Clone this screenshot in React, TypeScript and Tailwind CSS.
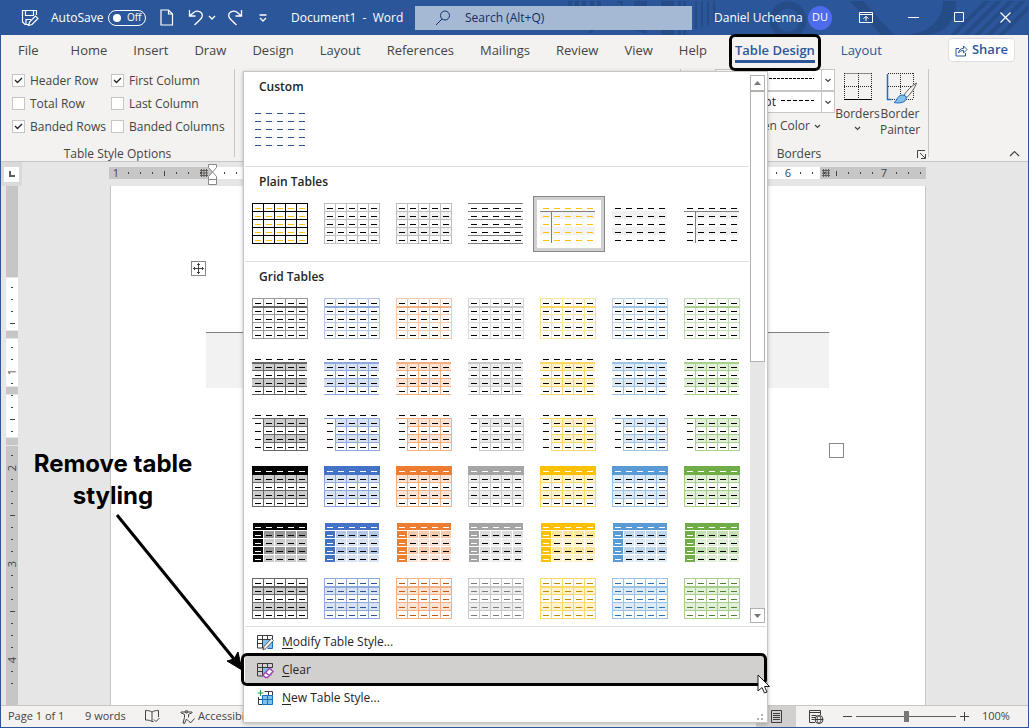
import { useState } from 'react'
import clsx from 'clsx'

// ─── Table style thumbnails ───────────────────────────────────────────────────

interface Palette {
  base: string
  line: string
  mid: string
  light: string
  text: string
}

const palettes: Record<string, Palette> = {
  Black: { base: '#000000', line: '#666666', mid: '#999999', light: '#cccccc', text: '#000000' },
  Blue: { base: '#4472c4', line: '#8eaadb', mid: '#b4c6e7', light: '#d9e2f3', text: '#2f5496' },
  Orange: { base: '#ed7d31', line: '#f4b083', mid: '#f7caac', light: '#fbe4d5', text: '#c45911' },
  Gray: { base: '#a5a5a5', line: '#c9c9c9', mid: '#dbdbdb', light: '#ededed', text: '#7b7b7b' },
  Gold: { base: '#ffc000', line: '#ffd966', mid: '#ffe599', light: '#fff2cc', text: '#bf8f00' },
  'Light Blue': { base: '#5b9bd5', line: '#9cc2e5', mid: '#bdd6ee', light: '#deeaf6', text: '#2e74b5' },
  Green: { base: '#70ad47', line: '#a8d08d', mid: '#c5e0b3', light: '#e2efd9', text: '#538135' },
}

const range = (n: number) => Array.from({ length: n }, (_, i) => i)

// Cells are 11x8, the table starts at 7,7 inside a 72x56 tile
const colX = (c: number) => 7 + c * 11
const rowY = (r: number) => 7 + r * 8

function Rect({ x, y, w, h, fill }: { x: number; y: number; w: number; h: number; fill: string }) {
  return <rect x={x} y={y} width={w} height={h} fill={fill} />
}

function Dashes({ color = '#000000', header, firstColumn }: { color?: string; header?: string; firstColumn?: string }) {
  return (
    <>
      {range(25).map((i) => {
        const r = Math.floor(i / 5)
        const c = i % 5
        const fill = r === 0 && header ? header : c === 0 && firstColumn ? firstColumn : color
        return <Rect key={i} x={colX(c) + 3} y={rowY(r) + 5} w={6} h={1} fill={fill} />
      })}
    </>
  )
}

function Grid({ color, fromRow = 0, fromCol = 0 }: { color: string; fromRow?: number; fromCol?: number }) {
  const x = colX(fromCol)
  const y = rowY(fromRow)
  return (
    <>
      {range(6 - fromRow).map((r) => (
        <Rect key={`h${r}`} x={x} y={rowY(r + fromRow)} w={63 - x} h={1} fill={color} />
      ))}
      {range(6 - fromCol).map((c) => (
        <Rect key={`v${c}`} x={colX(c + fromCol)} y={y} w={1} h={48 - y} fill={color} />
      ))}
    </>
  )
}

function Bands({ color, x = 7 }: { color: string; x?: number }) {
  return (
    <>
      <Rect x={x} y={15} w={62 - x} h={8} fill={color} />
      <Rect x={x} y={31} w={62 - x} h={8} fill={color} />
    </>
  )
}

const plainDrawings = [
  <><Grid color="#000000" /><Dashes color="#ffc000" /></>,
  <><Grid color="#bfbfbf" /><Dashes /></>,
  <><Bands color="#f2f2f2" /><Grid color="#bfbfbf" /><Dashes /></>,
  <>
    {range(6).map((r) => <Rect key={r} x={7} y={rowY(r)} w={55} h={1} fill="#7f7f7f" />)}
    <Dashes />
  </>,
  <>
    <Bands color="#f2f2f2" />
    <Rect x={7} y={15} w={55} h={1} fill="#7f7f7f" />
    <Rect x={18} y={15} w={1} h={32} fill="#7f7f7f" />
    <Dashes color="#ffc000" />
  </>,
  <><Bands color="#f2f2f2" /><Dashes /></>,
  <>
    <Bands color="#f2f2f2" x={19} />
    <Rect x={7} y={15} w={55} h={1} fill="#7f7f7f" />
    <Rect x={18} y={15} w={1} h={32} fill="#7f7f7f" />
    <Dashes />
  </>,
]

function gridDrawing(row: number, p: Palette) {
  switch (row) {
    case 0:
      return (
        <>
          <Grid color={p.mid} />
          <Rect x={8} y={15} w={54} h={2} fill={p.line} />
          <Dashes />
        </>
      )
    case 1:
      return (
        <>
          <Bands color={p.light} />
          <Rect x={7} y={15} w={55} h={2} fill={p.line} />
          {[23, 31, 39, 47].map((y) => <Rect key={y} x={7} y={y} w={55} h={1} fill={p.line} />)}
          {[18, 29, 40, 51].map((x) => <Rect key={x} x={x} y={16} w={1} h={31} fill={p.line} />)}
          <Dashes />
        </>
      )
    case 2:
      return (
        <>
          <Bands color={p.light} x={18} />
          <Rect x={7} y={15} w={55} h={1} fill={p.line} />
          <Grid color={p.line} fromRow={1} fromCol={1} />
          <Dashes />
        </>
      )
    case 3:
      return (
        <>
          <Bands color={p.light} />
          <Grid color={p.line} fromRow={1} />
          <Rect x={7} y={7} w={56} h={9} fill={p.base} />
          <Dashes header="#ffffff" />
        </>
      )
    case 4:
      return (
        <>
          <Rect x={8} y={8} w={54} h={7} fill={p.base} />
          {range(20).map((i) => {
            const r = Math.floor(i / 5)
            const c = i % 5
            const fill = c === 0 ? p.base : r % 2 === 0 ? p.mid : p.light
            return <Rect key={i} x={colX(c) + 1} y={rowY(r + 1) + 1} w={10} h={7} fill={fill} />
          })}
          <Dashes header="#ffffff" firstColumn="#ffffff" />
        </>
      )
    default:
      return (
        <>
          <Bands color={p.light} />
          <Grid color={p.line} />
          <Rect x={8} y={15} w={54} h={2} fill={p.line} />
          <Dashes color={p.text} />
        </>
      )
  }
}

function StyleTile({ label, selected, children }: { label: string; selected?: boolean; children: React.ReactNode }) {
  return (
    <button
      aria-label={label}
      aria-pressed={selected}
      className={clsx('grid h-14 w-[72px]', selected && 'bg-[#d2d0ce]')}
    >
      <svg width="72" height="56" shapeRendering="crispEdges">
        {selected && (
          <>
            <rect x="0.5" y="0.5" width="71" height="55" fill="none" stroke="#8a8886" />
            <rect x="4" y="4" width="64" height="48" fill="#ffffff" />
          </>
        )}
        {children}
      </svg>
    </button>
  )
}

function GallerySection({ title, last, children }: { title: string; last?: boolean; children: React.ReactNode }) {
  return (
    <section className={clsx(!last && 'border-b border-[#e1dfdd] pb-[9px]')}>
      <h3 className="flex h-[29px] items-center pl-3.5 font-semibold text-[#252423]">{title}</h3>
      <div className="flex flex-wrap">{children}</div>
    </section>
  )
}

// ─── Gallery menu ─────────────────────────────────────────────────────────────

function TableIcon({ kind }: { kind: 'modify' | 'clear' | 'new' }) {
  if (kind === 'new') {
    return (
      <svg width="17" height="17" viewBox="0 0 17 17" fill="none">
        <path d="M7.5 1.5h8v4M1.5 7v7.5h4M1.5 9.5h4M11.5 1.5v4" stroke="#3b3a39" />
        <path d="M5.500 5.500h10v9h-10z" fill="#83beec" stroke="#1a6fc0" />
        <path d="M10.500 5.500v9M5.500 9.500h10" stroke="#1a6fc0" />
        <path d="M3.500 0v6M0.500 3h6" stroke="#2ba14b" strokeWidth="1.200" />
      </svg>
    )
  }
  return (
    <svg width="17" height="17" viewBox="0 0 17 17" fill="none">
      <path d="M6 6h9v8H6z" fill="#83beec" />
      <path d="M0.500 1.500h15v4h-15zM0.500 5.500v8.500h6M5.500 1.500v12.500M10.500 1.500v4M0.500 9.500h5" stroke="#3b3a39" />
      {kind === 'modify' ? (
        <>
          <path d="M15.500 6v8.500h-5" stroke="#1a6fc0" />
          <path d="M14.500 4.500l2 2-7.500 8-3 1.500 1-3.500z" fill="#f3f2f1" stroke="#605e5c" />
        </>
      ) : (
        <path d="M12.500 6.500l3.500 3-5.500 6H8.500L6 13zM8.500 10.500l3.800 3" fill="#ffffff" stroke="#a33fb0" strokeWidth="1.400" />
      )}
    </svg>
  )
}

function MenuItem({ icon, hotkey, text, active }: { icon: React.ReactNode; hotkey: string; text: string; active?: boolean }) {
  return (
    <button
      role="menuitem"
      className={clsx('relative flex h-7 w-full items-center gap-2 pl-3 text-[#252423]', active ? 'bg-[#d2d0ce]' : 'hover:bg-[#edebe9]')}
    >
      {icon}
      <span>
        <u className="underline-offset-2">{hotkey}</u>
        {text}
      </span>
      {active && <span className="absolute -top-[3px] -right-0.5 -bottom-0.5 -left-1 rounded-md border-[3px] border-black" />}
    </button>
  )
}

function StyleGallery() {
  return (
    <div
      role="menu"
      className="absolute top-[71px] left-[242px] flex w-[525px] flex-col border border-[#c8c6c4] bg-white px-px text-xs shadow-[0_1px_4px_rgba(0,0,0,0.25)]"
    >
      <div className="flex h-[554px] gap-px overflow-hidden">
        <div className="w-[504px]">
          <GallerySection title="Custom">
            <StyleTile label="Custom style"><Dashes color="#2f5496" /></StyleTile>
          </GallerySection>
          <GallerySection title="Plain Tables">
            {plainDrawings.map((drawing, i) => (
              <StyleTile key={i} label={`Plain table ${i + 1}`} selected={i === 4}>{drawing}</StyleTile>
            ))}
          </GallerySection>
          <GallerySection title="Grid Tables" last>
            {range(6).map((row) =>
              Object.entries(palettes).map(([name, p]) => (
                <StyleTile key={`${row}-${name}`} label={`Grid table ${row + 1}, ${name}`}>
                  {gridDrawing(row, p)}
                </StyleTile>
              ))
            )}
          </GallerySection>
        </div>
        <div className="my-[3px] flex w-[15px] flex-col bg-[#e6e6e6]">
          <button aria-label="Scroll up" className="grid h-4 place-items-center border border-[#b3b0ad] bg-white">
            <svg width="7" height="4"><path d="M0 4l3.500-4L7 4z" fill="#7a7876" /></svg>
          </button>
          <div className="h-[271px] border border-[#b3b0ad] bg-white" />
          <button aria-label="Scroll down" className="mt-auto grid h-[15px] place-items-center border border-[#b3b0ad] bg-white">
            <svg width="7" height="4"><path d="M0 0h7L3.500 4z" fill="#7a7876" /></svg>
          </button>
        </div>
      </div>
      <div className="border-t border-[#e1dfdd] pt-px pr-px">
        <MenuItem icon={<TableIcon kind="modify" />} hotkey="M" text="odify Table Style..." />
        <MenuItem icon={<TableIcon kind="clear" />} hotkey="C" text="lear" active />
        <MenuItem icon={<TableIcon kind="new" />} hotkey="N" text="ew Table Style..." />
      </div>
      <svg className="mt-px mr-0.5 self-end" width="8" height="9" fill="#b3b0ad">
        <path d="M5 1h2v2H5zM5 5h2v2H5zM1 5h2v2H1z" />
      </svg>
    </div>
  )
}

// ─── Title bar ────────────────────────────────────────────────────────────────

function TitlePattern() {
  return (
    <svg className="pointer-events-none absolute top-0 right-0" width="480" height="35" fill="#254c87">
      <path d="M20 1h4v5h-4zM27 1h4v5h-4zM34 1h4v5h-4zM42 1h4v5h-4zM49 1h4v5h-4zM41 30h4v3h-4z" />
      <path d="M68 1h7v5zM86 1h13v5H86zM113 1h13v5h-13zM86 30h13v4zM113 30h13v5h-13zM130 1h3v5h-3zM135 1h3v5h-3zM130 30h3v5h-3zM135 30h3v5h-3z" />
      <path d="M147 1h2v28h-2zM153 1h2v26h-2zM159 1h2v24h-2zM165 1h2v20h-2z" />
      <circle cx="240" cy="20" r="15" fill="none" stroke="#254c87" strokeWidth="7" />
      <path d="M302 1h13l31 34h-13z" />
      <path d="M395 1h13c0 16-8 34-32 34h-18c26-2 37-18 37-34z" />
      <path d="M436 1h6l-34 34h-6zM448 1h6l-34 34h-6zM460 1h6l-34 34h-6zM472 1h6l-34 34h-6zM480 5v6l-24 24h-6z" />
    </svg>
  )
}

const iconBtn = 'flex h-6 items-center justify-center text-white'

function TitleBar() {
  return (
    <header className="relative flex h-[35px] items-center bg-[#2b579a] text-xs text-white">
      <TitlePattern />
      <div className="flex w-[414px] shrink-0 items-center pl-5">
        <button aria-label="Save" className={iconBtn}>
          <svg width="18" height="18" viewBox="0 0 18 18" fill="none" stroke="currentColor" strokeWidth="1.200">
            <path d="M15.500 6V1.500h-14V13l2.500 2.500h3M4.500 1.500v5h8v-5M5 15.500v-5h5M7.500 16.500l1-3.500 6-6 2.500 2.500-6 6z" />
          </svg>
        </button>
        <span className="ml-3 w-[57px]">AutoSave</span>
        <button role="switch" aria-checked="false" aria-label="AutoSave" className="flex h-4 w-[38px] items-center gap-1.5 rounded-full border border-white pl-1 text-[10px]">
          <span className="size-2 rounded-full bg-white" />
          Off
        </button>
        <button aria-label="New" className={clsx(iconBtn, 'ml-3.5')}>
          <svg width="14" height="17" viewBox="0 0 14 17" fill="none" stroke="currentColor" strokeWidth="1.200">
            <path d="M1 1h7.500l4 4v11H1zM8.500 1v4h4" />
          </svg>
        </button>
        <button aria-label="Undo" className={clsx(iconBtn, 'ml-3.5')}>
          <svg width="16" height="17" viewBox="0 0 16 17" fill="none" stroke="currentColor" strokeWidth="1.300">
            <path d="M1.500 1v6h6M1.500 7L6 3.200C10 0.500 15.500 3.500 14 8c-0.500 1.500-1.500 2.500-7.500 8" />
          </svg>
        </button>
        <button aria-label="Undo history" className={clsx(iconBtn, 'ml-1')}>
          <svg width="8" height="5" fill="none" stroke="currentColor" strokeWidth="1.300"><path d="M1 1l3 3 3-3" /></svg>
        </button>
        <button aria-label="Redo" className={clsx(iconBtn, 'ml-[11px]')}>
          <svg width="16" height="17" viewBox="0 0 16 17" fill="none" stroke="currentColor" strokeWidth="1.300">
            <path d="M14.500 1v6h-6M14.500 7L10 3.200C6 0.500 0.500 3.500 2 8c0.500 1.500 1.500 2.500 7.500 8" />
          </svg>
        </button>
        <button aria-label="Customize Quick Access Toolbar" className={clsx(iconBtn, 'ml-4')}>
          <svg width="8" height="8" fill="none" stroke="currentColor" strokeWidth="1.300"><path d="M0.500 1h7M1 4l3 3 3-3" /></svg>
        </button>
        <span className="ml-6 whitespace-pre">Document1  -  Word</span>
      </div>
      <label className="relative flex h-6 min-w-0 flex-1 items-center gap-3.5 bg-[#a6b9d4] pl-5 text-[#0f2f66]">
        <svg width="16" height="16" viewBox="0 0 16 16" fill="none" stroke="currentColor">
          <circle cx="10" cy="5.500" r="4.500" />
          <path d="M7 9l-6 6" />
        </svg>
        <input
          aria-label="Search"
          placeholder="Search (Alt+Q)"
          className="min-w-0 flex-1 bg-transparent outline-none placeholder:text-[#0f2f66]"
        />
      </label>
      <div className="relative flex w-[336px] shrink-0 items-center pl-[22px]">
        <span className="w-[94px] whitespace-nowrap">Daniel Uchenna</span>
        <button className="size-6 rounded-full bg-[#4f6bed] text-[11px]">DU</button>
        <button aria-label="Ribbon display options" className={clsx(iconBtn, 'ml-4 w-9')}>
          <svg width="14" height="11" viewBox="0 0 14 11" fill="none" stroke="currentColor">
            <path d="M0.500 0.500h13v10H0.500zM0.500 2.500h13M7 9V4.500M4.500 6.500L7 4.500l2.500 2" />
          </svg>
        </button>
        <button aria-label="Minimize" className={clsx(iconBtn, 'grow pl-1.5')}>
          <svg width="11" height="11" stroke="currentColor"><path d="M0 5.500h11" /></svg>
        </button>
        <button aria-label="Maximize" className={clsx(iconBtn, 'w-[46px]')}>
          <svg width="11" height="11" fill="none" stroke="currentColor"><path d="M0.500 0.500h9v9h-9z" /></svg>
        </button>
        <button aria-label="Close" className={clsx(iconBtn, 'w-[46px]')}>
          <svg width="11" height="11" stroke="currentColor" strokeWidth="1.200"><path d="M0.500 0.500l10 10M10.500 0.500l-10 10" /></svg>
        </button>
      </div>
    </header>
  )
}

// ─── Ribbon ───────────────────────────────────────────────────────────────────

const tabs = ['File', 'Home', 'Insert', 'Draw', 'Design', 'Layout', 'References', 'Mailings', 'Review', 'View', 'Help']

function RibbonTabs() {
  return (
    <nav className="flex h-[34px] items-start justify-between bg-[#f3f2f1] pr-[13px] pl-[17px] text-[13px] text-[#444444]">
      <div className="flex h-8 items-center gap-[26px]">
        {tabs.map((tab) => (
          <button key={tab} className="first:mr-1.5">{tab}</button>
        ))}
        <button className="relative ml-0.5 font-semibold whitespace-nowrap text-[#2b579a]">
          Table Design
          <span className="absolute inset-x-0 -bottom-0.5 h-[3px] bg-[#2b579a]" />
          <span className="absolute -inset-x-1.5 -top-[7px] -bottom-2.5 z-10 rounded-md border-[3px] border-black" />
        </button>
        <button className="text-[#2b579a]">Layout</button>
      </div>
      <button className="mt-[3px] flex h-6 items-center gap-1 rounded-sm border border-[#e1dfdd] bg-white px-1.5 font-semibold text-[#2b579a]">
        <svg width="13" height="13" viewBox="0 0 13 13" fill="none" stroke="currentColor">
          <path d="M4 4.500H1v7.500h9.500V9M3.500 9c0.500-3 2-4.500 5-4.500V2L12 5.500 8.500 9V6.500c-2 0-3.500 0.500-5 2.500z" />
        </svg>
        Share
      </button>
    </nav>
  )
}

function Option({ label, checked }: { label: string; checked?: boolean }) {
  const [on, setOn] = useState(!!checked)
  return (
    <label className="flex h-[23px] items-center gap-[5px] whitespace-nowrap">
      <span className="grid">
        <input
          type="checkbox"
          checked={on}
          onChange={(e) => setOn(e.target.checked)}
          className="size-[13px] appearance-none border border-[#c8c6c4] bg-white [grid-area:1/1]"
        />
        {on && (
          <svg className="pointer-events-none [grid-area:1/1]" width="13" height="13" fill="none" stroke="#252423" strokeWidth="1.300">
            <path d="M3 6l2.500 2.500L10 4" />
          </svg>
        )}
      </span>
      {label}
    </label>
  )
}

function Chevron() {
  return (
    <svg width="7" height="5" fill="none" stroke="#444444" strokeWidth="1.200"><path d="M1 1l2.500 2.500L6 1" /></svg>
  )
}

function LineSelect({ label, value, dash, start }: { label: string; value: string; dash: string; start: number }) {
  return (
    <div className="grid h-[22px] w-[120px]">
      <select aria-label={label} className="h-[22px] appearance-none border border-[#c8c6c4] bg-white pl-9 text-[#252423] [grid-area:1/1]">
        <option>{value}</option>
      </select>
      <svg className="pointer-events-none [grid-area:1/1]" width="120" height="22" fill="none" stroke="#000000">
        <path d={`M${start} 9.500H99`} strokeDasharray={dash} />
        <path d="M106.500 1v20" stroke="#c8c6c4" />
        <path d="M110.500 10l2.500 2.500 2.500-2.500" stroke="#444444" strokeWidth="1.200" />
      </svg>
    </div>
  )
}

function Ribbon() {
  return (
    <div className="flex h-[93px] border-b border-[#c8c6c4] bg-[#f3f2f1] text-xs text-[#444444]">
      <section className="mb-1 flex w-[234px] shrink-0 flex-col border-r border-[#c8c6c4]">
        <div className="grid grid-flow-col grid-rows-3 justify-start gap-x-[5px] pl-[11px]">
          <Option label="Header Row" checked />
          <Option label="Total Row" />
          <Option label="Banded Rows" checked />
          <Option label="First Column" checked />
          <Option label="Last Column" />
          <Option label="Banded Columns" />
        </div>
        <h2 className="mt-2 text-center leading-4">Table Style Options</h2>
      </section>
      <section className="mb-1 flex-1 border-r border-[#c8c6c4]" aria-label="Table Styles" />
      <section className="mb-1 flex w-[248px] shrink-0 flex-col border-r border-[#c8c6c4]">
        <div className="flex h-[69px] justify-end pr-2">
          <div className="flex flex-col">
            <LineSelect label="Line style" value=" " dash="3 1" start={50} />
            <LineSelect label="Line weight" value="½ pt" dash="4 2" start={66} />
            <button className="flex items-center gap-1 self-end pt-[5px] pr-3.5 leading-4 whitespace-nowrap">
              Pen Color <Chevron />
            </button>
          </div>
          <button className="flex w-[45px] flex-col items-center pt-1">
            <svg width="28" height="28" className="shrink-0" fill="none" stroke="#252423">
              <path d="M0.500 0.500h27M0.500 0v26M27.500 0v26M14.500 0v26M0 13.500h28" strokeDasharray="1 1" />
              <path d="M0 26.500h28" stroke="#000000" />
            </svg>
            <span className="mt-[5px] leading-4">Borders</span>
            <span className="mt-1"><Chevron /></span>
          </button>
          <button className="flex w-10 flex-col items-center pt-1">
            <svg className="ml-1 shrink-0" width="32" height="32" fill="none" stroke="#252423">
              <path d="M2 0.500h25M27.500 0v26M14.500 0v26M2 13.500h26M2 26.500h26" strokeDasharray="1 1" />
              <path d="M1.500 1v25.500h4" stroke="#1a6fc0" strokeWidth="1.500" />
              <path d="M30.500 10c-5 3-9 7-12.500 12l3 2.500C25 20 28.500 16 30.500 10z" fill="#f3f2f1" stroke="#605e5c" />
              <path d="M8 29.500c3-1 3-7 8-7.500 3 0 5 2 4 4.500-1.500 3.500-8 4-12 3z" fill="#83beec" stroke="#1a6fc0" />
            </svg>
            <span className="mt-px leading-4">Border Painter</span>
          </button>
        </div>
        <div className="mt-2 grid grid-cols-[1fr_auto] items-center pr-0.5">
          <h2 className="text-center leading-4">Borders</h2>
          <button aria-label="Borders settings">
            <svg width="9" height="9" fill="none" stroke="#444444"><path d="M0.500 8V0.500H8M3 3l5 5M8.500 4v4.500H4" /></svg>
          </button>
        </div>
      </section>
      <button aria-label="Collapse the ribbon" className="flex w-[99px] shrink-0 items-end justify-end pr-2 pb-1">
        <svg width="11" height="7" fill="none" stroke="#444444" strokeWidth="1.200"><path d="M1 6l4.500-4.500L10 6" /></svg>
      </button>
    </div>
  )
}

// ─── Document area ────────────────────────────────────────────────────────────

function GridMark() {
  return (
    <svg width="8" height="8" stroke="#605e5c"><path d="M1.500 0v8M4 0v8M6.500 0v8M0 1.500h8M0 4h8M0 6.500h8" /></svg>
  )
}

// Ticks stand 1/8 inch apart, 12px each
function Tick({ index, vertical }: { index: number; vertical?: boolean }) {
  const whole = index % 8 === 0 && index !== 0
  const half = Math.abs(index % 8) === 4
  return (
    <span className={clsx('flex size-3 shrink-0 items-center justify-center', vertical && '-rotate-90')}>
      {whole ? Math.abs(index / 8) : index !== 0 && <span className={clsx('w-px bg-[#444444]', half ? 'h-[5px]' : 'h-0.5')} />}
    </span>
  )
}

function HorizontalRuler() {
  return (
    <div className="relative mt-[5px] grid h-3 w-[816px] text-[11px] leading-3 text-[#444444]">
      <div className="flex [grid-area:1/1]">
        <div className="flex w-[103px] items-center justify-end bg-[#c6c6c6] pr-1"><GridMark /></div>
        <div className="w-[608px] bg-white" />
        <div className="flex flex-1 items-center bg-[#c6c6c6] pl-0.5"><GridMark /></div>
      </div>
      <div className="flex pl-px [grid-area:1/1]">
        {range(68).map((i) => (
          <Tick key={i} index={i - 8} />
        ))}
      </div>
      <svg className="absolute -top-[3px] left-[99px]" width="9" height="22" fill="#ffffff" stroke="#8a8886">
        <path d="M0.500 0.500h8v3l-4 4.500-4-4.500zM0.500 15.500v-3L4.500 8l4 4.500v3zM0.500 15.500h8v5h-8z" />
      </svg>
    </div>
  )
}

const rulerBands = [
  'h-[91px] bg-[#c6c6c6]',
  'h-[52px] bg-white',
  'h-[7px] bg-[#c6c6c6]',
  'h-[47px] bg-white',
  'h-[7px] bg-[#c6c6c6]',
  'h-[42px] bg-white',
  'h-[7px] bg-[#c6c6c6]',
  'flex-1 bg-[#c6c6c6]',
]

// Ticks that the table's row markers cover
const coveredTicks = [5, 14]

function VerticalRuler() {
  return (
    <div className="ml-[5px] grid w-[11px] shrink-0 text-[11px] leading-3 text-[#444444]">
      <div className="flex flex-col gap-px [grid-area:1/1]">
        {rulerBands.map((band, i) => (
          <div key={i} className={band} />
        ))}
      </div>
      <div className="flex flex-col items-center pt-24 [grid-area:1/1]">
        {range(34).map((i) => (
          <Tick key={i} index={coveredTicks.includes(i + 1) ? 0 : i + 1} vertical />
        ))}
      </div>
    </div>
  )
}

function Workspace() {
  return (
    <main className="flex flex-1 flex-col bg-[#e6e6e6]">
      <div className="flex h-6">
        <div className="mr-[87px] flex w-[21px] shrink-0 items-center justify-center bg-[#dadada]">
          <button aria-label="Left tab" className="grid size-[15px] place-items-center bg-white">
            <svg width="6" height="6" fill="none" stroke="#605e5c" strokeWidth="2"><path d="M1 0v5h5" /></svg>
          </button>
        </div>
        <HorizontalRuler />
      </div>
      <div className="flex flex-1">
        <VerticalRuler />
        <article className="ml-[93px] w-[816px] shrink-0 border-x border-[#c8c6c4] bg-white pt-[75px] pl-20">
          <button aria-label="Move table" className="grid size-[15px] place-items-center border border-[#8a8886]">
            <svg width="11" height="11" fill="none" stroke="#444444">
              <path d="M5.500 0v11M0 5.500h11M4 2l1.500-1.500L7 2M4 9l1.500 1.500L7 9M2 4L0.500 5.500 2 7M9 4l1.500 1.500L9 7" />
            </svg>
          </button>
          <table className="mt-14 ml-[15px] w-[623px]">
            <tbody>
              <tr className="h-[55px] border-t border-[#7f7f7f] bg-[#f2f2f2]"><td /></tr>
              <tr className="h-[55px]"><td /></tr>
            </tbody>
          </table>
          <div className="ml-[638px] size-[15px] border border-[#8a8886]" />
        </article>
      </div>
    </main>
  )
}

// ─── Status bar ───────────────────────────────────────────────────────────────

function StatusBar() {
  return (
    <footer className="flex h-[22px] items-center border-t border-[#c8c6c4] bg-[#f3f2f1] pl-[7px] text-[11px] text-[#444444]">
      <button className="w-[77px] text-left">Page 1 of 1</button>
      <button className="w-[60px] text-left">9 words</button>
      <button aria-label="Proofing">
        <svg width="15" height="13" viewBox="0 0 15 13" fill="none" stroke="currentColor">
          <path d="M7 2v9M7 2C5.500 1 3.500 0.500 0.500 0.500v9.500c3 0 5 0.500 6.500 1.500M7 2c1.500-1 3.500-1.500 6.500-1.500V7M7 11.500h1.500M9 9.500l2 2 3.500-3.500" />
        </svg>
      </button>
      <button className="ml-5 flex items-center gap-[3px] whitespace-nowrap">
        <svg width="15" height="14" viewBox="0 0 15 14" fill="none" stroke="currentColor">
          <circle cx="6.500" cy="1.800" r="1.300" />
          <path d="M0.500 2.500l4 2v3L3 13l1.500 0.500L6.500 9l1 1.500M12.500 2.500l-4 2v3M1 2l11 0M8.500 10.500l2 2.500 4-4.500" />
        </svg>
        Accessibility: Good to go
      </button>
      <div className="ml-auto flex h-full items-center">
        <button aria-label="Print layout" className="flex h-full w-10 items-center justify-center bg-[#d2d0ce]">
          <svg width="11" height="13" fill="none" stroke="#3b3a39"><path d="M0.500 0.500h10v12H0.500zM2 3.500h7M2 5.500h7M2 7.500h7M2 9.500h7" /></svg>
        </button>
        <button aria-label="Web layout" className="ml-[13px] w-[34px]">
          <svg width="15" height="14" fill="none" stroke="#3b3a39">
            <path d="M6 12.500H0.500v-12h11V5M0.500 2.500h11M2.500 5.500h5M2.500 7.500h4M2.500 9.500h3" />
            <circle cx="10" cy="9.500" r="4" />
            <path d="M6 9.500h8M10 5.500c-2.500 2.500-2.500 5.500 0 8 2.500-2.500 2.500-5.500 0-8z" />
          </svg>
        </button>
        <button aria-label="Zoom out" className="w-[13px]"><svg width="9" height="9" stroke="#444444"><path d="M0 4.500h9" /></svg></button>
        <input
          type="range"
          aria-label="Zoom"
          defaultValue={50}
          className="h-3 w-[100px] appearance-none bg-[linear-gradient(#605e5c,#605e5c)] bg-[length:100%_1px] bg-center bg-no-repeat [&::-webkit-slider-thumb]:h-[11px] [&::-webkit-slider-thumb]:w-[5px] [&::-webkit-slider-thumb]:appearance-none [&::-webkit-slider-thumb]:bg-[#797775]"
        />
        <button aria-label="Zoom in" className="ml-1"><svg width="9" height="9" stroke="#444444"><path d="M0 4.500h9M4.500 0v9" /></svg></button>
        <button className="w-[59px] pl-[13px] text-left">100%</button>
      </div>
    </footer>
  )
}

// ─── Annotations ──────────────────────────────────────────────────────────────

function Annotations() {
  return (
    <>
      <p className="absolute top-[448px] left-6 w-44 text-center font-['Inter',sans-serif] text-2xl leading-8 font-bold text-black">
        Remove table styling
      </p>
      <svg className="pointer-events-none absolute top-[510px] left-[110px]" width="140" height="165">
        <path d="M6 5l117 144" stroke="#000000" strokeWidth="3" />
        <path d="M131 160l-15-9 7-2 4-7z" stroke="#000000" strokeWidth="1" />
      </svg>
      <svg className="pointer-events-none absolute top-[674px] left-[756px]" width="13" height="20">
        <path d="M1 1v16l4-3.500 2.500 5.500 2.500-1-2.500-5.500h5z" fill="#ffffff" stroke="#1b1a19" />
      </svg>
    </>
  )
}

export default function App() {
  return (
    <div className="relative flex min-h-screen flex-col overflow-hidden border-x border-b border-[#2b579a] font-['Open_Sans','Noto_Sans',sans-serif]">
      <TitleBar />
      <RibbonTabs />
      <Ribbon />
      <Workspace />
      <StatusBar />
      <StyleGallery />
      <Annotations />
    </div>
  )
}
